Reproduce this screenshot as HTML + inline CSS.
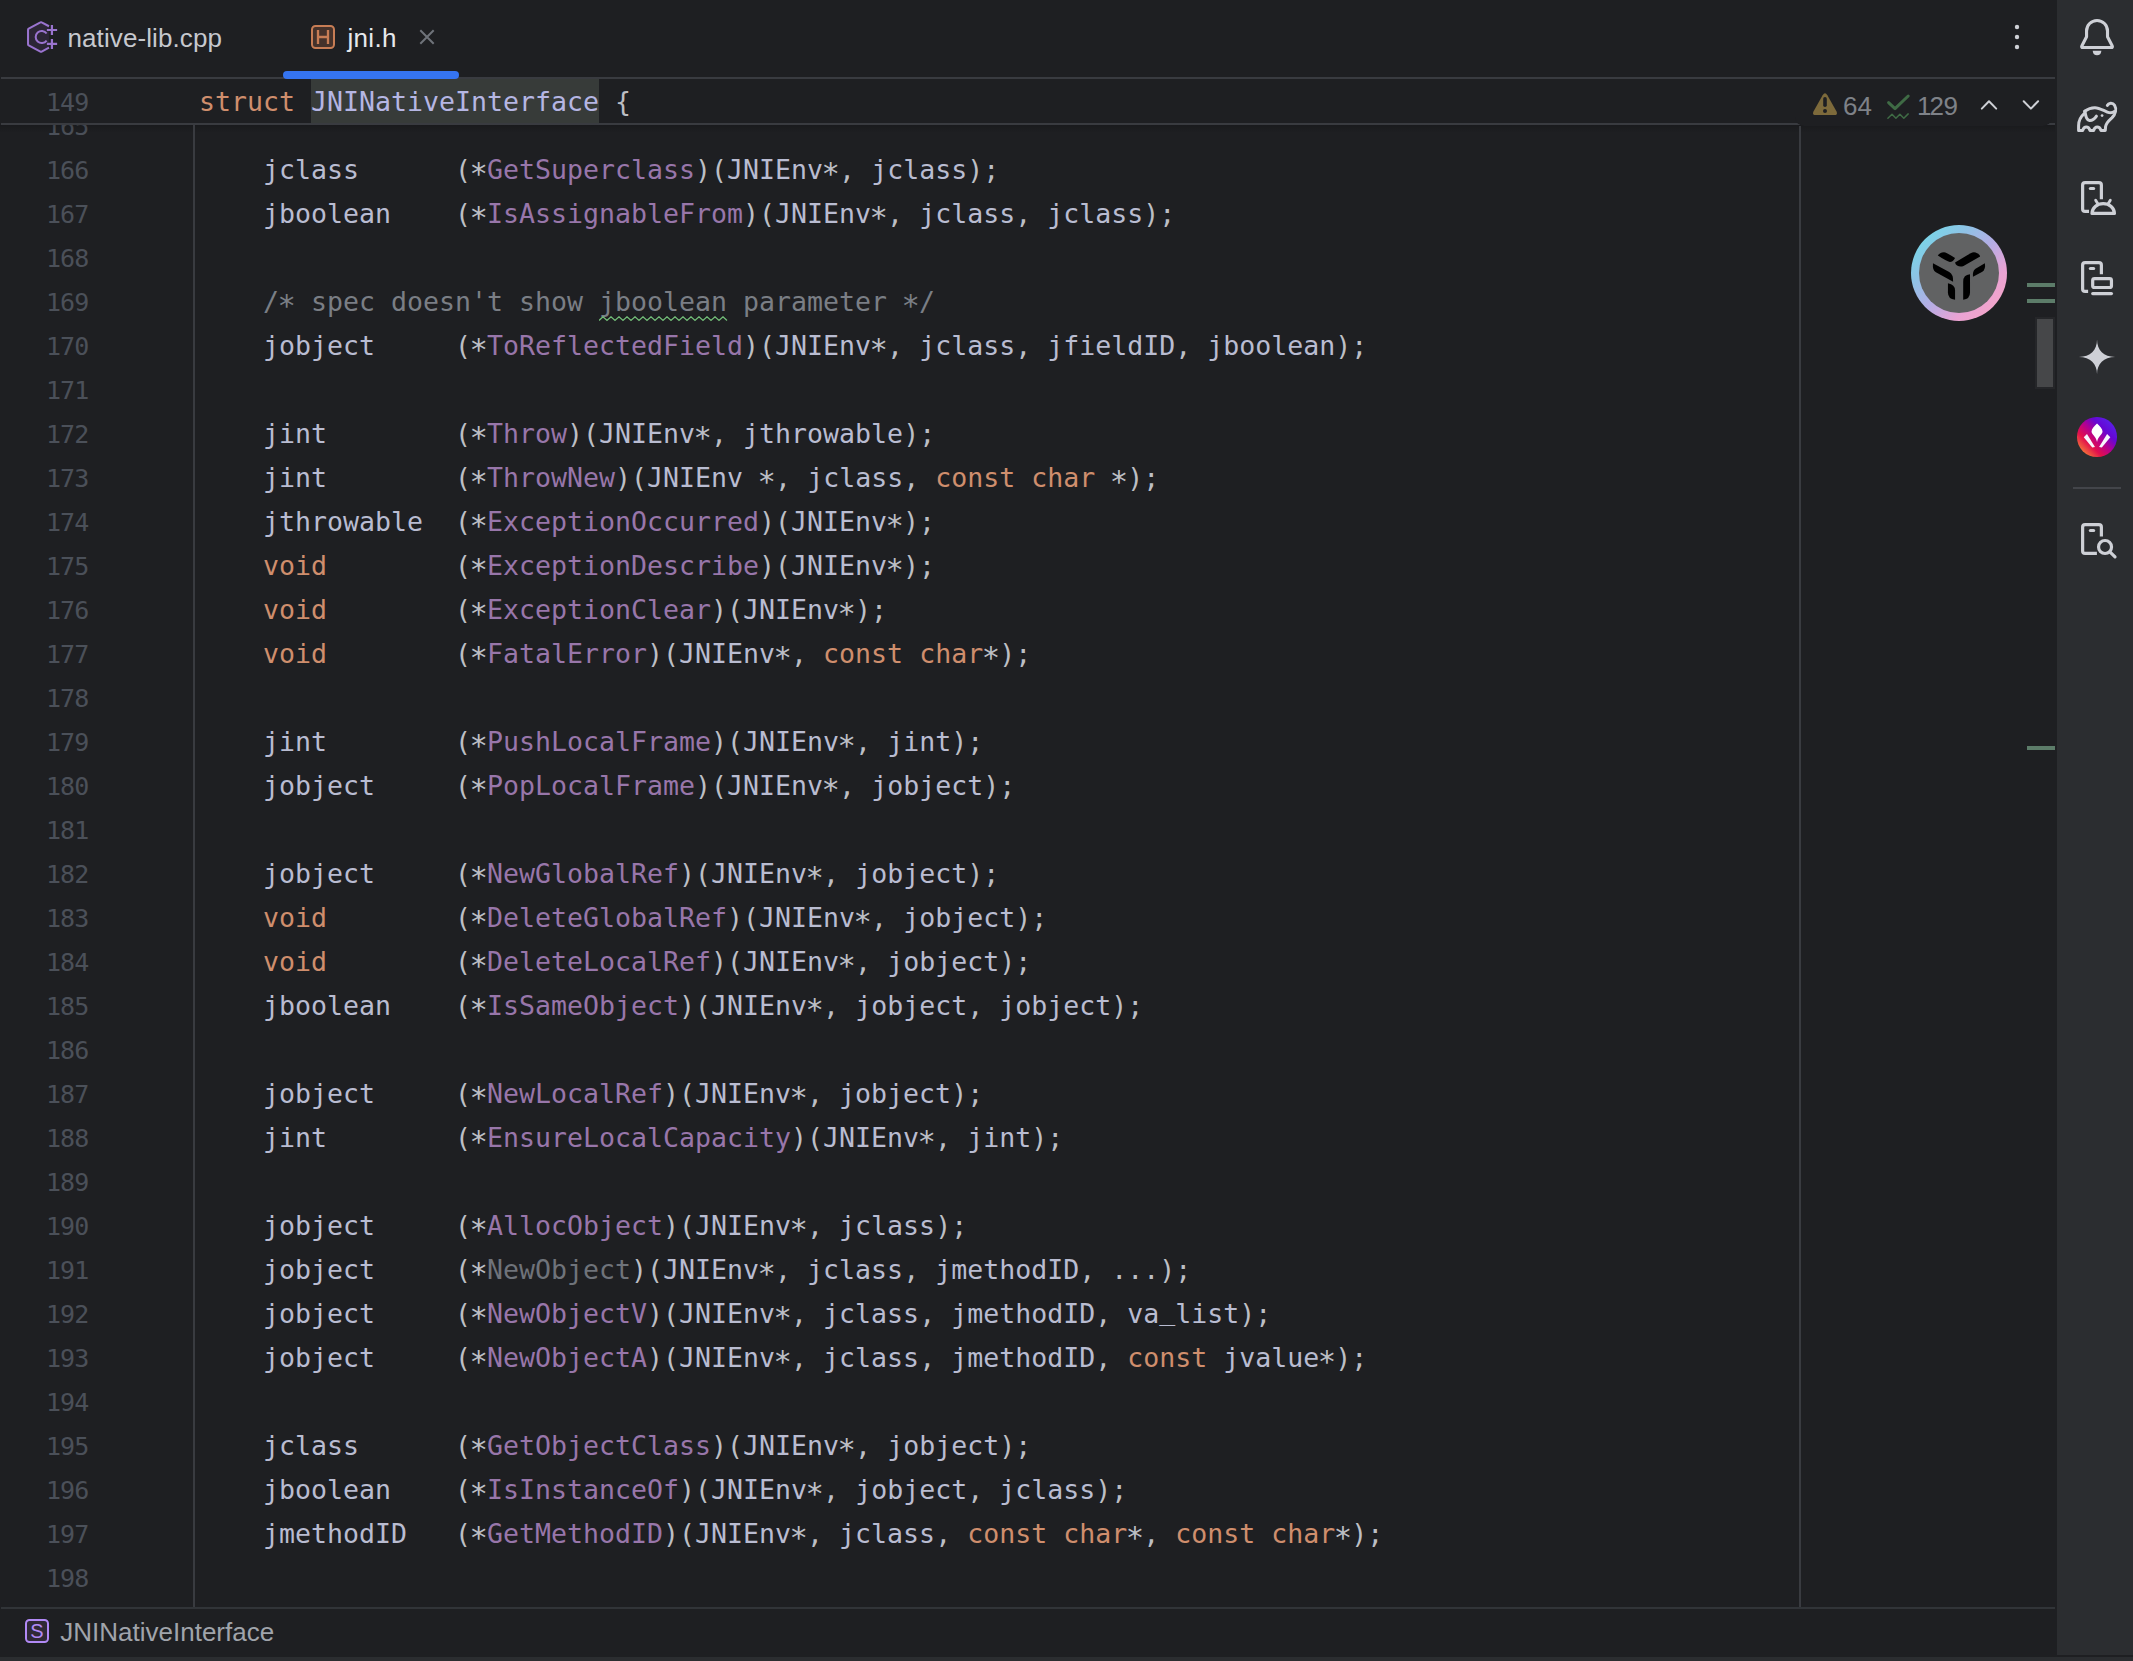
<!DOCTYPE html>
<html lang="en">
<head>
<meta charset="utf-8">
<title>jni.h</title>
<style>
html,body{margin:0;padding:0;background:#1e1f22;}
body{width:2133px;height:1661px;overflow:hidden;position:relative;}
#app{position:absolute;left:0;top:0;width:2133px;height:1661px;overflow:hidden;background:#1e1f22;font-family:"Liberation Sans","DejaVu Sans",sans-serif;}
#app div,#app span,#app svg{box-sizing:border-box;}
.abs{position:absolute;}
/* editor */
#editor{position:absolute;left:0;top:0;width:2055px;height:1607px;overflow:hidden;}
.cl,.ln,.st{position:absolute;height:44px;line-height:44px;white-space:pre;font-family:"DejaVu Sans Mono","Liberation Mono",monospace;}
.cl,.st{left:199px;font-size:26.588px;color:#bcbec4;}
.ln{left:46px;font-size:25px;letter-spacing:-0.95px;color:#4b5059;}
.kw{color:#cf8e6d;}
.fn{color:#9876aa;}
.un{color:#6f737a;}
.cm{color:#7a7e85;}
.ty{color:inherit;}
.sn{color:#b5b6e3;}
.as{display:inline-block;width:16px;height:20px;line-height:20px;text-align:left;text-indent:-1.5px;font-size:30.5px;position:relative;top:5px;}
.line{position:absolute;background:#393b40;}
/* tabs */
.tab{position:absolute;top:0;height:77px;line-height:77px;font-size:26px;white-space:pre;}
/* toolbar */
#tb{position:absolute;left:2057px;top:0;width:76px;height:1661px;background:#2b2d30;}
#tb svg{position:absolute;left:0;width:76px;height:76px;overflow:visible;}
.us{position:relative;top:-3px;}
.td{color:#b9bcd1;}

</style>
</head>
<body>
<div id="app">
<div id="editor">
<div class="ln" style="top:105px">165</div>
<div class="ln" style="top:149px">166</div>
<div class="ln" style="top:193px">167</div>
<div class="ln" style="top:237px">168</div>
<div class="ln" style="top:281px">169</div>
<div class="ln" style="top:325px">170</div>
<div class="ln" style="top:369px">171</div>
<div class="ln" style="top:413px">172</div>
<div class="ln" style="top:457px">173</div>
<div class="ln" style="top:501px">174</div>
<div class="ln" style="top:545px">175</div>
<div class="ln" style="top:589px">176</div>
<div class="ln" style="top:633px">177</div>
<div class="ln" style="top:677px">178</div>
<div class="ln" style="top:721px">179</div>
<div class="ln" style="top:765px">180</div>
<div class="ln" style="top:809px">181</div>
<div class="ln" style="top:853px">182</div>
<div class="ln" style="top:897px">183</div>
<div class="ln" style="top:941px">184</div>
<div class="ln" style="top:985px">185</div>
<div class="ln" style="top:1029px">186</div>
<div class="ln" style="top:1073px">187</div>
<div class="ln" style="top:1117px">188</div>
<div class="ln" style="top:1161px">189</div>
<div class="ln" style="top:1205px">190</div>
<div class="ln" style="top:1249px">191</div>
<div class="ln" style="top:1293px">192</div>
<div class="ln" style="top:1337px">193</div>
<div class="ln" style="top:1381px">194</div>
<div class="ln" style="top:1425px">195</div>
<div class="ln" style="top:1469px">196</div>
<div class="ln" style="top:1513px">197</div>
<div class="ln" style="top:1557px">198</div>
<div class="cl" style="top:148px">    <span class="td">jclass</span>      (<span class="as">*</span><span class="fn">GetSuperclass</span>)(<span class="td">JNIEnv</span><span class="as">*</span>, <span class="td">jclass</span>);</div>
<div class="cl" style="top:192px">    <span class="td">jboolean</span>    (<span class="as">*</span><span class="fn">IsAssignableFrom</span>)(<span class="td">JNIEnv</span><span class="as">*</span>, <span class="td">jclass</span>, <span class="td">jclass</span>);</div>
<div class="cl" style="top:280px"><span class="cm">    /<span class="as">*</span> spec doesn't show <span class="ty">jboolean</span> parameter <span class="as">*</span>/</span></div>
<div class="cl" style="top:324px">    <span class="td">jobject</span>     (<span class="as">*</span><span class="fn">ToReflectedField</span>)(<span class="td">JNIEnv</span><span class="as">*</span>, <span class="td">jclass</span>, <span class="td">jfieldID</span>, <span class="td">jboolean</span>);</div>
<div class="cl" style="top:412px">    <span class="td">jint</span>        (<span class="as">*</span><span class="fn">Throw</span>)(<span class="td">JNIEnv</span><span class="as">*</span>, <span class="td">jthrowable</span>);</div>
<div class="cl" style="top:456px">    <span class="td">jint</span>        (<span class="as">*</span><span class="fn">ThrowNew</span>)(<span class="td">JNIEnv</span> <span class="as">*</span>, <span class="td">jclass</span>, <span class="kw">const</span> <span class="kw">char</span> <span class="as">*</span>);</div>
<div class="cl" style="top:500px">    <span class="td">jthrowable</span>  (<span class="as">*</span><span class="fn">ExceptionOccurred</span>)(<span class="td">JNIEnv</span><span class="as">*</span>);</div>
<div class="cl" style="top:544px">    <span class="kw">void</span>        (<span class="as">*</span><span class="fn">ExceptionDescribe</span>)(<span class="td">JNIEnv</span><span class="as">*</span>);</div>
<div class="cl" style="top:588px">    <span class="kw">void</span>        (<span class="as">*</span><span class="fn">ExceptionClear</span>)(<span class="td">JNIEnv</span><span class="as">*</span>);</div>
<div class="cl" style="top:632px">    <span class="kw">void</span>        (<span class="as">*</span><span class="fn">FatalError</span>)(<span class="td">JNIEnv</span><span class="as">*</span>, <span class="kw">const</span> <span class="kw">char</span><span class="as">*</span>);</div>
<div class="cl" style="top:720px">    <span class="td">jint</span>        (<span class="as">*</span><span class="fn">PushLocalFrame</span>)(<span class="td">JNIEnv</span><span class="as">*</span>, <span class="td">jint</span>);</div>
<div class="cl" style="top:764px">    <span class="td">jobject</span>     (<span class="as">*</span><span class="fn">PopLocalFrame</span>)(<span class="td">JNIEnv</span><span class="as">*</span>, <span class="td">jobject</span>);</div>
<div class="cl" style="top:852px">    <span class="td">jobject</span>     (<span class="as">*</span><span class="fn">NewGlobalRef</span>)(<span class="td">JNIEnv</span><span class="as">*</span>, <span class="td">jobject</span>);</div>
<div class="cl" style="top:896px">    <span class="kw">void</span>        (<span class="as">*</span><span class="fn">DeleteGlobalRef</span>)(<span class="td">JNIEnv</span><span class="as">*</span>, <span class="td">jobject</span>);</div>
<div class="cl" style="top:940px">    <span class="kw">void</span>        (<span class="as">*</span><span class="fn">DeleteLocalRef</span>)(<span class="td">JNIEnv</span><span class="as">*</span>, <span class="td">jobject</span>);</div>
<div class="cl" style="top:984px">    <span class="td">jboolean</span>    (<span class="as">*</span><span class="fn">IsSameObject</span>)(<span class="td">JNIEnv</span><span class="as">*</span>, <span class="td">jobject</span>, <span class="td">jobject</span>);</div>
<div class="cl" style="top:1072px">    <span class="td">jobject</span>     (<span class="as">*</span><span class="fn">NewLocalRef</span>)(<span class="td">JNIEnv</span><span class="as">*</span>, <span class="td">jobject</span>);</div>
<div class="cl" style="top:1116px">    <span class="td">jint</span>        (<span class="as">*</span><span class="fn">EnsureLocalCapacity</span>)(<span class="td">JNIEnv</span><span class="as">*</span>, <span class="td">jint</span>);</div>
<div class="cl" style="top:1204px">    <span class="td">jobject</span>     (<span class="as">*</span><span class="fn">AllocObject</span>)(<span class="td">JNIEnv</span><span class="as">*</span>, <span class="td">jclass</span>);</div>
<div class="cl" style="top:1248px">    <span class="td">jobject</span>     (<span class="as">*</span><span class="un">NewObject</span>)(<span class="td">JNIEnv</span><span class="as">*</span>, <span class="td">jclass</span>, <span class="td">jmethodID</span>, ...);</div>
<div class="cl" style="top:1292px">    <span class="td">jobject</span>     (<span class="as">*</span><span class="fn">NewObjectV</span>)(<span class="td">JNIEnv</span><span class="as">*</span>, <span class="td">jclass</span>, <span class="td">jmethodID</span>, <span class="td">va<span class="us">_</span>list</span>);</div>
<div class="cl" style="top:1336px">    <span class="td">jobject</span>     (<span class="as">*</span><span class="fn">NewObjectA</span>)(<span class="td">JNIEnv</span><span class="as">*</span>, <span class="td">jclass</span>, <span class="td">jmethodID</span>, <span class="kw">const</span> <span class="td">jvalue</span><span class="as">*</span>);</div>
<div class="cl" style="top:1424px">    <span class="td">jclass</span>      (<span class="as">*</span><span class="fn">GetObjectClass</span>)(<span class="td">JNIEnv</span><span class="as">*</span>, <span class="td">jobject</span>);</div>
<div class="cl" style="top:1468px">    <span class="td">jboolean</span>    (<span class="as">*</span><span class="fn">IsInstanceOf</span>)(<span class="td">JNIEnv</span><span class="as">*</span>, <span class="td">jobject</span>, <span class="td">jclass</span>);</div>
<div class="cl" style="top:1512px">    <span class="td">jmethodID</span>   (<span class="as">*</span><span class="fn">GetMethodID</span>)(<span class="td">JNIEnv</span><span class="as">*</span>, <span class="td">jclass</span>, <span class="kw">const</span> <span class="kw">char</span><span class="as">*</span>, <span class="kw">const</span> <span class="kw">char</span><span class="as">*</span>);</div>
<svg class="abs" style="left:599px;top:316px" width="130" height="6" viewBox="0 0 130 6"><polyline points="0,4.4 4,0.8 8,4.4 12,0.8 16,4.4 20,0.8 24,4.4 28,0.8 32,4.4 36,0.8 40,4.4 44,0.8 48,4.4 52,0.8 56,4.4 60,0.8 64,4.4 68,0.8 72,4.4 76,0.8 80,4.4 84,0.8 88,4.4 92,0.8 96,4.4 100,0.8 104,4.4 108,0.8 112,4.4 116,0.8 120,4.4 124,0.8 128,4.4" fill="none" stroke="#72bd78" stroke-width="1.3" stroke-linejoin="miter"/></svg>
</div>
<!-- sticky header cover -->
<div class="abs" style="left:0;top:0;width:2055px;height:125px;background:#1e1f22"></div>
<div class="abs" style="left:0;top:125px;width:2055px;height:8px;background:linear-gradient(rgba(0,0,0,0.16),rgba(0,0,0,0))"></div>
<div class="line" style="left:193px;top:125px;width:2px;height:1482px"></div>
<div class="line" style="left:1799px;top:126px;width:2px;height:1481px"></div>
<!-- sticky line -->
<div class="abs" style="left:311px;top:79px;width:288px;height:44px;background:#373b39"></div>
<div class="ln" style="top:81px">149</div>
<div class="st" style="top:79.5px"><span class="kw">struct</span> <span class="sn">JNINativeInterface</span> {</div>
<div class="line" style="left:1px;top:77px;width:2054px;height:2px"></div>
<div class="line" style="left:1px;top:123px;width:2054px;height:2px"></div>
<div class="line" style="left:1px;top:1607px;width:2054px;height:2px;background:#313438"></div>
<!-- inspections widget -->
<div class="abs" style="left:1795px;top:79px;width:257px;height:47px;background:#1e1f22;border-radius:0 0 9px 9px"></div>
<svg class="abs" style="left:1800px;top:80px" width="255" height="50" viewBox="0 0 255 50">
  <path d="M22.6 15.2 Q25 11.2 27.4 15.2 L36.4 31.2 Q38.4 35.1 34 35.1 L16 35.1 Q11.6 35.1 13.6 31.2 Z" fill="#7d6a3b"/>
  <path d="M25 18.8 V25.2" stroke="#1e1f22" stroke-width="3.6" stroke-linecap="round" fill="none"/>
  <circle cx="25" cy="30.9" r="2" fill="#1e1f22"/>
  <path d="M88.6 22.6 L95 28.6 L108.2 16" stroke="#3f6b45" stroke-width="3" stroke-linecap="round" stroke-linejoin="round" fill="none"/>
  <path d="M87.9 38.2 L92 34.3 L95.9 38.2 L99.9 34.3 L103.8 38.2 L108.2 33.9" stroke="#3f6b45" stroke-width="1.5" stroke-linecap="round" stroke-linejoin="round" fill="none"/>
  <path d="M181.8 28.6 L189 21.3 L196.2 28.6" stroke="#ced0d6" stroke-width="2" stroke-linecap="round" stroke-linejoin="round" fill="none"/>
  <path d="M223.7 21.3 L230.9 28.6 L238.1 21.3" stroke="#ced0d6" stroke-width="2" stroke-linecap="round" stroke-linejoin="round" fill="none"/>
</svg>
<div class="abs ui" style="left:1843px;top:79px;line-height:54px;font-size:26px;color:#7e8288;white-space:pre">64</div>
<div class="abs ui" style="left:1917px;top:79px;line-height:54px;font-size:26px;color:#7e8288;white-space:pre;letter-spacing:-0.5px"><span style="letter-spacing:-2px">1</span>29</div>
<!-- tabs -->
<svg class="abs" style="left:16px;top:10px" width="54" height="54" viewBox="0 0 1661 1661">
  <path d="M1015 500 L770 368 L370 585 V1075 L770 1292 L1015 1160 Z" fill="#2c2636"/>
  <path d="M1015 500 L790 380 Q770 368 750 380 L390 574 Q370 585 370 607 V1053 Q370 1075 390 1086 L750 1280 Q770 1292 790 1280 L1015 1160" fill="none" stroke="#9a74cf" stroke-width="62"/>
  <path d="M942 723 A186 186 0 1 0 942 941" fill="none" stroke="#9a74cf" stroke-width="62"/>
  <path d="M950 615 H1265 M1105 460 V770 M950 1045 H1265 M1105 890 V1200" fill="none" stroke="#9a74cf" stroke-width="68"/>
</svg>
<div class="tab" style="left:67.5px;letter-spacing:0.1px;color:#c6c8ce">native-lib.cpp</div>
<svg class="abs" style="left:309px;top:23px" width="28" height="28" viewBox="0 0 28 28">
  <rect x="3" y="3" width="22" height="22" rx="3.5" fill="#45322b" stroke="#c77d55" stroke-width="2"/>
  <path d="M9 7 V21 M19 7 V21 M9 14 H19" stroke="#c77d55" stroke-width="2.3" fill="none"/>
</svg>
<div class="tab" style="left:347.4px;letter-spacing:0.35px;color:#e6e8ec">jni.h</div>
<svg class="abs" style="left:417px;top:27px" width="20" height="20" viewBox="0 0 20 20">
  <path d="M3.3 3.3 L16.7 16.7 M16.7 3.3 L3.3 16.7" stroke="#6f737a" stroke-width="2" fill="none"/>
</svg>
<div class="abs" style="left:283px;top:71px;width:176px;height:8px;border-radius:4px;background:#3574f0"></div>
<svg class="abs" style="left:2007px;top:17px" width="20" height="40" viewBox="0 0 20 40">
  <circle cx="10" cy="10" r="2.2" fill="#ced0d6"/><circle cx="10" cy="20" r="2.2" fill="#ced0d6"/><circle cx="10" cy="30" r="2.2" fill="#ced0d6"/>
</svg>
<!-- scrollbar -->
<div class="abs" style="left:2027px;top:283px;width:28px;height:4px;background:#5c7c69"></div>
<div class="abs" style="left:2027px;top:299px;width:28px;height:4px;background:#5c7c69"></div>
<div class="abs" style="left:2027px;top:746px;width:28px;height:4px;background:#5c7c69"></div>
<div class="abs" style="left:2035px;top:317px;width:20px;height:72px;background:#252629"></div>
<div class="abs" style="left:2037px;top:319px;width:16px;height:68px;background:#464749"></div>
<!-- floating assistant button -->
<div class="abs" style="left:1911px;top:225px;width:96px;height:96px;border-radius:50%;background:linear-gradient(135deg,#79d6e8 12%,#8dc3e6 30%,#b6ade5 52%,#eaa3d4 72%,#f4a5c8 90%)"></div>
<div class="abs" style="left:1919px;top:233px;width:80px;height:80px;border-radius:50%;background:#616263"></div>
<svg class="abs" style="left:1905px;top:219px" width="108" height="108" viewBox="0 0 1661 1661">
  <g fill="#000">
  <path d="M505 560 Q530 515 600 510 Q640 515 770 600 Q740 660 690 660 Q640 650 505 560 Z"/>
  <path d="M770 670 L1010 525 Q1060 500 1110 525 Q1150 545 1155 575 L900 722 Q850 745 800 715 Q775 700 770 670 Z"/>
  <path d="M430 680 L680 815 Q745 850 740 965 L475 820 Q420 790 430 680 Z"/>
  <path d="M1045 890 Q1035 800 1085 765 L1228 680 Q1245 775 1190 810 Z"/>
  <path d="M895 1240 V960 Q895 860 1000 850 V1130 Q1000 1230 895 1240 Z"/>
  <path d="M660 990 Q770 1010 770 1100 V1240 Q660 1230 660 1130 Z"/>
  </g>
</svg>
<!-- breadcrumbs -->
<div class="abs" style="left:0;top:1609px;width:2057px;height:48px;background:#1e1f22"></div>
<svg class="abs" style="left:23px;top:1617px" width="28" height="28" viewBox="0 0 28 28">
  <rect x="3" y="3" width="22" height="22" rx="3.5" fill="#2f2936" stroke="#b189f5" stroke-width="2"/>
</svg>
<div class="abs" style="left:23px;top:1617px;width:28px;height:28px;line-height:29px;text-align:center;font-size:20px;color:#b189f5">S</div>
<div class="abs" style="left:60.3px;top:1609px;height:46px;line-height:46px;font-size:26px;color:#a0a4ab;white-space:pre">JNINativeInterface</div>
<div class="abs" style="left:0;top:1657px;width:2133px;height:4px;background:#2b2d30"></div>
<div class="abs" style="left:2057px;top:1655px;width:76px;height:2px;background:#1e1f22;z-index:5"></div>
<!-- right toolbar -->
<div id="tb">
<svg style="top:0" viewBox="0 0 1661 1661">
  <path d="M646 805 V676 A229 229 0 0 1 1104 676 V805 L1205 1000 Q1225 1039 1182 1039 H568 Q525 1039 545 1000 Z" fill="none" stroke="#ced0d6" stroke-width="68" stroke-linejoin="round"/>
  <path d="M780 1110 H970 Q960 1210 875 1210 Q790 1210 780 1110 Z" fill="#ced0d6"/>
</svg>
<svg style="top:79px" viewBox="0 0 1661 1661">
  <g fill="none" stroke="#ced0d6" stroke-width="66" stroke-linecap="round" stroke-linejoin="round">
  <path d="M1100 578 C1125 520 1215 505 1258 575 C1305 655 1285 765 1200 850 C1125 920 1075 960 1062 1040 L1055 1125 L962 1125 C945 1075 910 1050 880 1050 C850 1050 815 1075 800 1125 L722 1125 C705 1075 670 1050 640 1050 C610 1050 577 1075 560 1125 L472 1125 L472 1020 C472 900 530 810 600 750"/>
  <path d="M603 706 C680 652 760 626 830 628 C920 632 1000 682 1100 722 C1160 745 1210 745 1255 712"/>
  <path d="M612 705 C620 780 640 900 710 908 C770 912 830 860 862 812"/>
  </g>
  <circle cx="985" cy="800" r="30" fill="#ced0d6"/>
</svg>
<svg style="top:159px" viewBox="0 0 1661 1661">
  <g fill="none" stroke="#ced0d6" stroke-width="70">
  <path d="M970 880 V570 Q970 516 916 516 H614 Q560 516 560 570 V1091 Q560 1145 614 1145 H700"/>
  <path d="M730 645 H800" stroke-linecap="round"/>
  <path d="M765 1190 A245 215 0 0 1 1255 1190 Z" stroke-linejoin="round"/>
  <path d="M845 900 L895 985 M1165 900 L1115 985" stroke-width="62" stroke-linecap="round"/>
  </g>
</svg>
<svg style="top:239px" viewBox="0 0 1661 1661">
  <g fill="none" stroke="#ced0d6" stroke-width="70">
  <path d="M970 770 V570 Q970 516 916 516 H614 Q560 516 560 570 V1091 Q560 1145 614 1145 H680"/>
  <path d="M730 645 H800" stroke-linecap="round"/>
  <rect x="780" y="865" width="410" height="195" rx="40"/>
  <path d="M780 1192 H1190" stroke-linecap="round"/>
  </g>
</svg>
<svg style="top:319px" viewBox="0 0 1661 1661">
  <path d="M875 450 C875 680 1020 830 1270 830 C1020 830 875 980 875 1210 C875 980 730 830 480 830 C730 830 875 680 875 450 Z" fill="#ced0d6"/>
</svg>
<div class="abs" style="left:0;top:399px;width:76px;height:76px;filter:blur(0.64px)">
<div class="abs" style="left:20.2px;top:18.2px;width:39.6px;height:39.6px;border-radius:50%;background:linear-gradient(45deg,#f4703a 13.7%,#e20f4c 31.9%,#b5008f 50%,#6606d4 68.1%,#5a1ee6 86.3%)"></div>
<svg style="top:0" viewBox="0 0 1661 1661">
  <path d="M875 535 C935 595 995 650 995 710 C995 775 905 800 875 940 C845 800 755 775 755 710 C755 650 815 595 875 535 Z" fill="#fff"/>
  <path d="M655 765 L585 835 L770 1060 L830 1050 Z" fill="#f6f6fd"/>
  <path d="M1095 765 L1165 835 L980 1060 L920 1050 Z" fill="#f6f6fd"/>
</svg>
</div>
<div class="abs" style="left:16px;top:487px;width:48px;height:2px;background:#43454a"></div>
<svg style="top:501px" viewBox="0 0 1661 1661">
  <g fill="none" stroke="#ced0d6" stroke-width="70">
  <path d="M970 778 V570 Q970 516 916 516 H614 Q560 516 560 570 V1091 Q560 1145 614 1145 H872"/>
  <path d="M730 645 H800" stroke-linecap="round"/>
  <circle cx="1050" cy="1005" r="142"/>
  <path d="M1155 1110 L1268 1222" stroke-linecap="round"/>
  </g>
</svg>
</div>

</div>
</body>
</html>
